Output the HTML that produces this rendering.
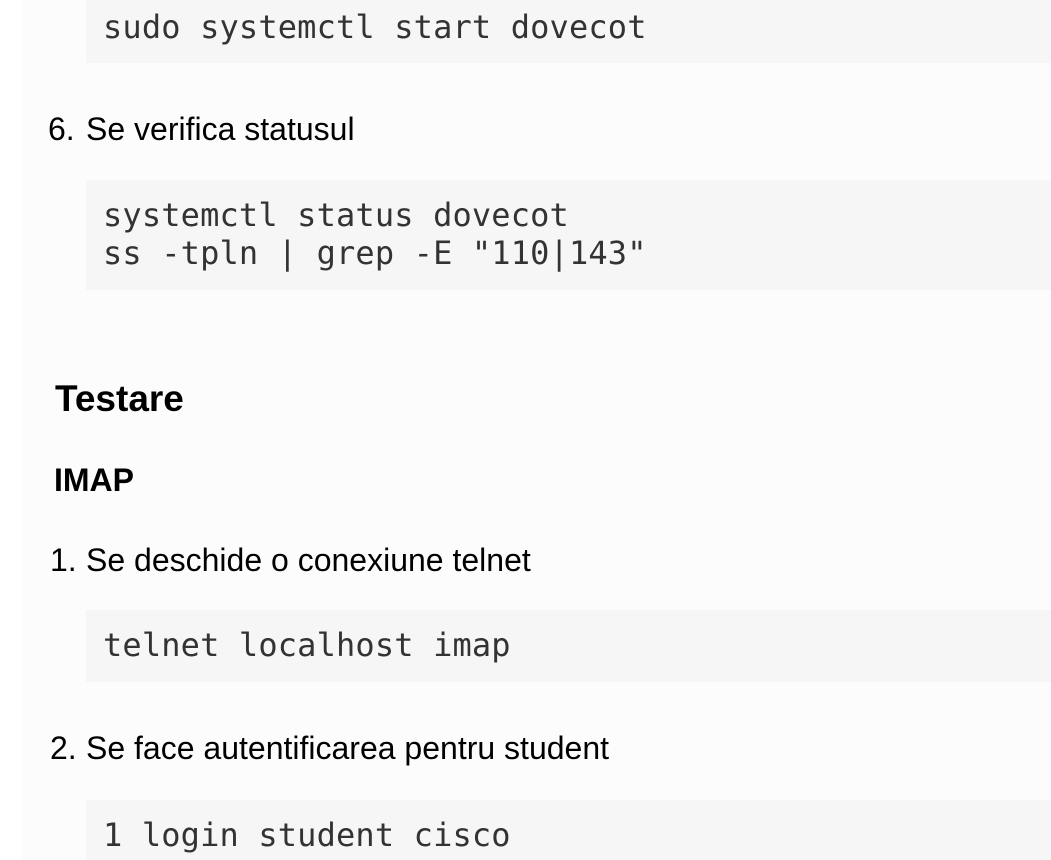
<!DOCTYPE html>
<html><head><meta charset="utf-8"><style>
html,body{margin:0;padding:0;width:1051px;height:860px;overflow:hidden;background:#fff;}
.main{position:absolute;left:22px;top:0;width:1029px;height:860px;background:#fcfcfd;}
.code{position:absolute;left:86px;width:965px;background:#f6f6f7;}
.code pre{margin:0;position:absolute;left:17px;font-family:"DejaVu Sans Mono","Liberation Mono",monospace;font-size:32px;letter-spacing:0.15px;line-height:38px;color:#333;}
.t{position:absolute;font-family:"Liberation Sans",Arial,sans-serif;font-size:32px;color:#000;white-space:nowrap;line-height:36px;}
.n{position:absolute;font-family:"Liberation Sans",Arial,sans-serif;font-size:32px;line-height:36px;}
</style></head><body>
<div class="main"></div>
<div class="code" style="top:0;height:63px;"><pre style="top:8px">sudo systemctl start dovecot</pre></div>
<div class="n" style="left:48px;top:111px">6.</div><div class="t" style="left:86px;top:111px">Se verifica statusul</div>
<div class="code" style="top:180px;height:110px;"><pre style="top:16px">systemctl status dovecot
ss -tpln | grep -E "110|143"</pre></div>
<div class="t" style="left:55px;top:378px;font-weight:bold;font-size:37px;line-height:42px">Testare</div>
<div class="t" style="left:54px;top:462px;font-weight:bold;font-size:32px">IMAP</div>
<div class="n" style="left:50px;top:542px">1.</div><div class="t" style="left:86px;top:542px">Se deschide o conexiune telnet</div>
<div class="code" style="top:610px;height:72px;"><pre style="top:16px">telnet localhost imap</pre></div>
<div class="n" style="left:50px;top:730px">2.</div><div class="t" style="left:86px;top:730px">Se face autentificarea pentru student</div>
<div class="code" style="top:800px;height:60px;"><pre style="top:16px">1 login student cisco</pre></div>
</body></html>
